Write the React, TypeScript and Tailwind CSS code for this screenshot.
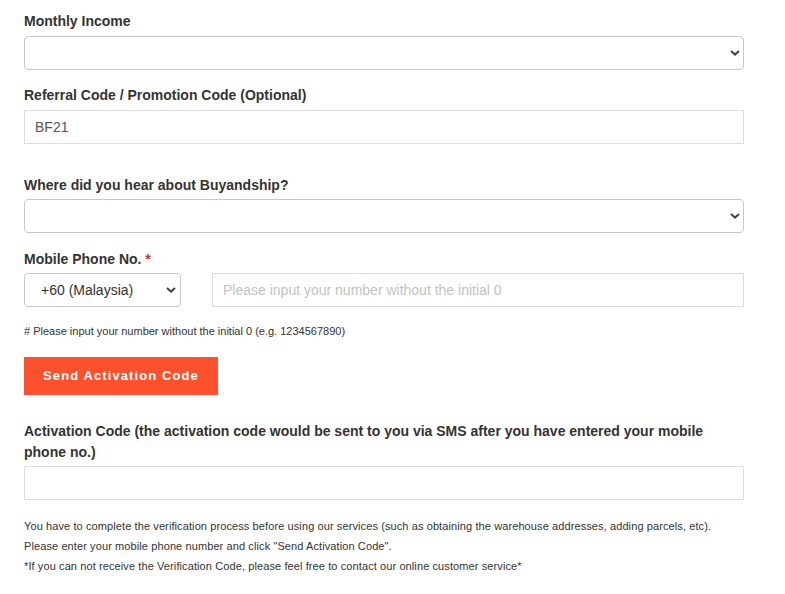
export default function App() {
  const Chevron = ({ className }: { className: string }) => (
    <svg
      viewBox="0 0 10 6"
      className={"pointer-events-none absolute top-1/2 -translate-y-1/2 w-[10px] h-[6px] " + className}
    >
      <path d="M1 1l4 3.6L9 1" fill="none" stroke="#444" strokeWidth="2" />
    </svg>
  );

  return (
    <div className="bg-white min-h-[594px] font-['Liberation_Sans',Arial,sans-serif] text-[#333]">
      <div className="w-[720px] ml-6 pt-[11px]">
        {/* Monthly income */}
        <label className="block text-[14px] font-bold leading-5 mb-[5px]">Monthly Income</label>
        <div className="relative">
          <select className="appearance-none w-full h-[34px] rounded-[4px] border border-[#c8c8c8] bg-white px-3 text-[14px]">
            <option></option>
          </select>
          <Chevron className="right-[4px]" />
        </div>

        <label className="block text-[14px] font-bold leading-5 mt-[15px] mb-[5px]">
          Referral Code / Promotion Code (Optional)
        </label>
        <input
          defaultValue="BF21"
          className="block w-full h-[34px] border border-[#ddd] px-[10px] text-[14px] text-[#555] outline-none"
        />

        <label className="block text-[14px] font-bold leading-5 mt-[31px] mb-[4px]">
          Where did you hear about Buyandship?
        </label>
        <div className="relative">
          <select className="appearance-none w-full h-[34px] rounded-[4px] border border-[#c8c8c8] bg-white px-3 text-[14px]">
            <option></option>
          </select>
          <Chevron className="right-[4px]" />
        </div>

        <label className="block text-[14px] font-bold leading-5 mt-[16px] mb-[4px]">
          Mobile Phone No. <span className="text-[#d0312d]">*</span>
        </label>
        <div className="flex gap-[31px]">
          <div className="relative w-[157px] shrink-0">
            <select className="appearance-none w-full h-[34px] rounded-[4px] border border-[#c8c8c8] bg-white pl-4 text-[14px] text-[#333]">
              <option>+60 (Malaysia)</option>
            </select>
            <Chevron className="right-[5px]" />
          </div>
          <input
            placeholder="Please input your number without the initial 0"
            className="block flex-1 h-[34px] border border-[#ddd] px-[10px] text-[14px] outline-none placeholder:text-[#c2c2c2]"
          />
        </div>

        <p className="text-[11px] leading-[17px] mt-[16px] text-[#333]">
          # Please input your number without the initial 0 (e.g. 1234567890)
        </p>

        <button className="block mt-[17px] w-[194px] h-[38px] bg-[#fb512c] text-white text-[13px] font-bold tracking-[1.1px]">
          Send Activation Code
        </button>

        <label className="block text-[14px] font-bold leading-[21px] mt-[26px] mb-[3px] pr-6">
          Activation Code (the activation code would be sent to you via SMS after you have entered your mobile phone no.)
        </label>
        <input className="block w-full h-[34px] border border-[#ddd] px-[10px] text-[14px] outline-none" />

        <div className="mt-[16px] text-[11px] leading-5 text-[#333] tracking-[0.1px]">
          <p>
            You have to complete the verification process before using our services (such as obtaining the warehouse addresses, adding parcels, etc).
          </p>
          <p>Please enter your mobile phone number and click "Send Activation Code".</p>
          <p>*If you can not receive the Verification Code, please feel free to contact our online customer service*</p>
        </div>
      </div>
    </div>
  );
}
